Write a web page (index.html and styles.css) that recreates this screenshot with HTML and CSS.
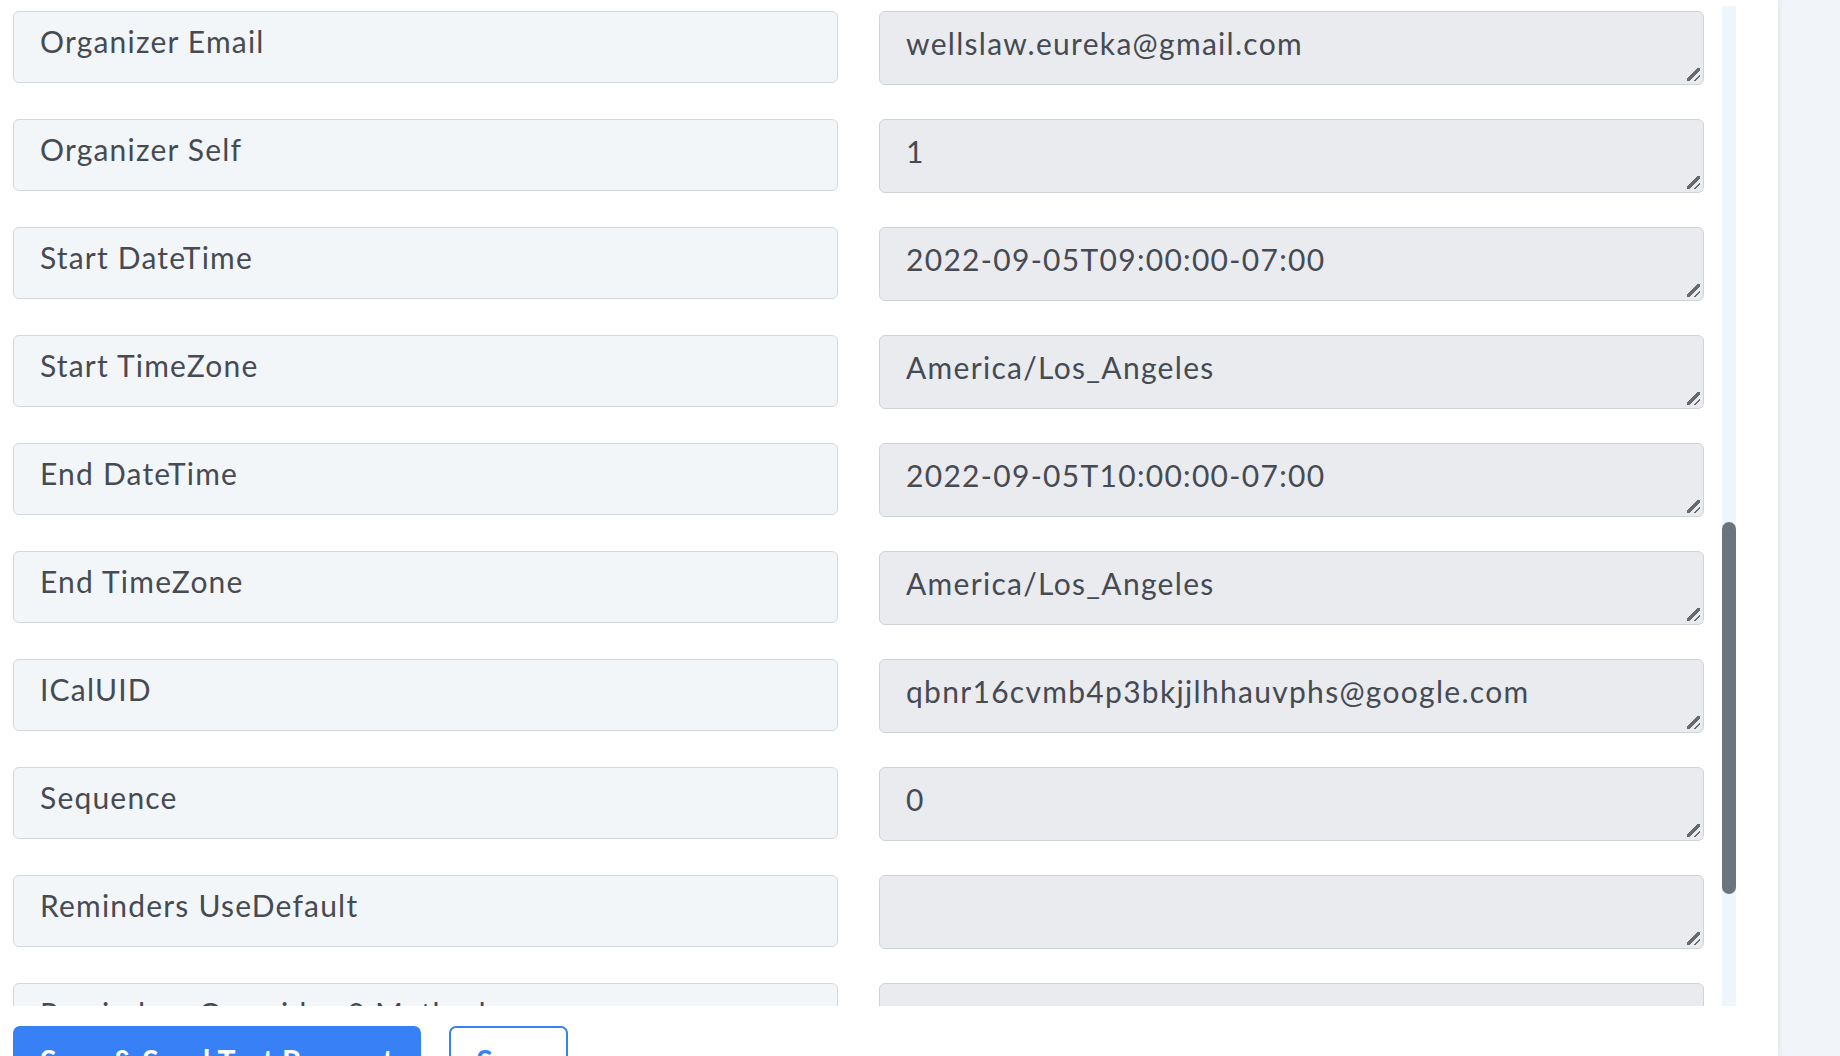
FILE: index.html
```html
<!DOCTYPE html>
<html lang="en">
<head>
    <meta charset="UTF-8">
    <title>Map fields</title>
    <link rel="stylesheet" href="styles.css">
</head>
<body>

<div class="page">
    <div class="main">
        <div class="scroller">
            <div class="fields">
                <div class="label">Organizer Email</div>
                <textarea class="value" readonly>wellslaw.eureka@gmail.com</textarea>

                <div class="label">Organizer Self</div>
                <textarea class="value" readonly>1</textarea>

                <div class="label">Start DateTime</div>
                <textarea class="value" readonly>2022-09-05T09:00:00-07:00</textarea>

                <div class="label">Start TimeZone</div>
                <textarea class="value" readonly>America/Los_Angeles</textarea>

                <div class="label">End DateTime</div>
                <textarea class="value" readonly>2022-09-05T10:00:00-07:00</textarea>

                <div class="label">End TimeZone</div>
                <textarea class="value" readonly>America/Los_Angeles</textarea>

                <div class="label">ICalUID</div>
                <textarea class="value" readonly>qbnr16cvmb4p3bkjjlhhauvphs@google.com</textarea>

                <div class="label">Sequence</div>
                <textarea class="value" readonly>0</textarea>

                <div class="label">Reminders UseDefault</div>
                <textarea class="value" readonly></textarea>

                <div class="label">Reminders Overrides 0 Method</div>
                <textarea class="value" readonly></textarea>
            </div>
            <div class="track"><div class="thumb"></div></div>
        </div>
        <div class="actions">
            <button class="btn btn-primary">Save &amp; Send Test Request</button>
            <button class="btn btn-outline">Save</button>
        </div>
    </div>
    <div class="side"></div>
</div>

</body>
</html>
```

FILE: styles.css
```css
html, body, div {
    margin: 0;
    padding: 0;
}
html, body {
    width: 100%;
    height: 100%;
    overflow: hidden;
}
body {
    background-color: #fff;
    font-family: Lato, "Open Sans", sans-serif;
    color: #464a52;
}
.page {
    display: flex;
    height: 100%;
}
.main {
    flex: none;
    width: 1778px;
}
.side {
    flex: 1;
    background-color: #f1f4f8;
    box-shadow: inset 4px 0 4px -2px rgba(0,0,0,.05);
}
.scroller {
    display: flex;
    height: 1000px;
    margin-top: 6px;
    overflow: hidden;
}
.fields {
    flex: none;
    width: 1709px;
    padding: 5px 0 0 13px;
    display: grid;
    grid-template-columns: 825px 825px;
    column-gap: 41px;
    row-gap: 34px;
    align-items: start;
    align-content: start;
}
.label {
    box-sizing: border-box;
    height: 72px;
    padding: 11px 0 0 26px;
    background-color: #f3f6f9;
    border: 1.5px solid #d3d7dc;
    border-radius: 6px;
    font-size: 30px;
    line-height: 36px;
    letter-spacing: 1.2px;
    white-space: nowrap;
}
/* resize grip drawn as two short diagonal strokes */
.value {
    box-sizing: border-box;
    display: block;
    width: 825px;
    height: 74px;
    margin: 0;
    padding: 13px 26px 0 26px;
    background-color: #e9ebef;
    background-image:
        linear-gradient(135deg, transparent 42%, #66696e 42%, #66696e 60%, transparent 60%),
        linear-gradient(135deg, transparent 42%, #66696e 42%, #66696e 58%, transparent 58%);
    background-size: 6px 6px, 13px 13px;
    background-position: right 3px bottom 3px, right 3px bottom 3px;
    background-repeat: no-repeat;
    border: 1.5px solid #cfd3d8;
    border-radius: 6px;
    font-family: inherit;
    font-size: 30px;
    line-height: 36px;
    letter-spacing: 1.3px;
    color: #464a52;
    outline: none;
    overflow: hidden;
    resize: none;
}
.track {
    flex: none;
    width: 14px;
    background-color: #eef5fd;
}
.thumb {
    width: 14px;
    height: 372px;
    margin-top: 516px;
    border-radius: 7px;
    background-color: #6c757d;
}
.actions {
    display: flex;
    gap: 28px;
    padding: 20px 0 0 13px;
}
.btn {
    font-family: inherit;
    font-size: 30px;
    font-weight: bold;
    line-height: 36px;
    letter-spacing: 0.5px;
    padding: 14px 25px;
    border-radius: 7px;
    cursor: pointer;
}
.btn-primary {
    background-color: #3880f6;
    border: 2px solid #3880f6;
    color: #fff;
}
.btn-outline {
    background-color: #fff;
    border: 2px solid #3880f6;
    color: #3880f6;
}
```
